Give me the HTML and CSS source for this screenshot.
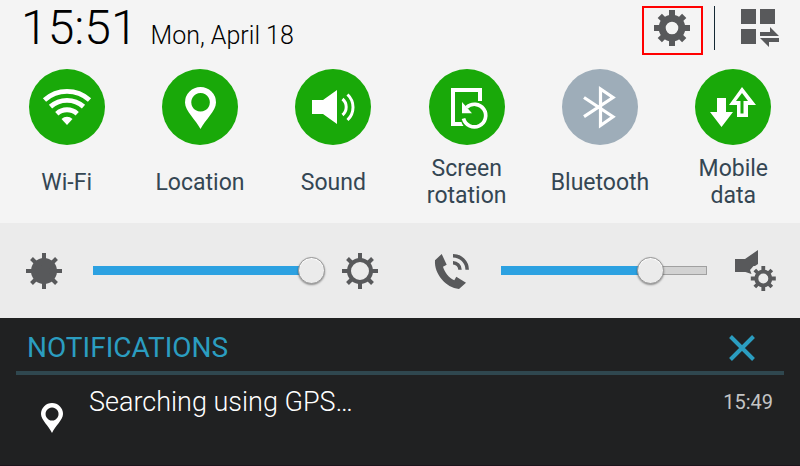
FILE: index.html
```html
<!DOCTYPE html>
<html lang="en">
<head>
    <meta charset="UTF-8">
    <meta name="viewport" content="width=device-width, initial-scale=1.0">
    <title>Notification panel</title>
    <link rel="stylesheet" href="styles.css">
</head>
<body>
    <header class="status">
        <time class="clock">15:51</time>
        <span class="date">Mon, April 18</span>
        <div class="actions">
            <button type="button" class="settings" aria-label="Settings">
                <svg width="36" height="36" viewBox="-18 -18 36 36">
                    <circle r="9.8" fill="none" stroke="#58595b" stroke-width="7"/>
                    <path d="M0-18V-11M0 18V11M-18 0H-11M18 0H11M-12.2-12.2L-8-8M12.2-12.2L8-8M-12.2 12.2L-8 8M12.2 12.2L8 8" stroke="#58595b" stroke-width="6"/>
                </svg>
            </button>
            <button type="button" class="edit" aria-label="Edit quick settings">
                <svg width="38" height="38" viewBox="0 0 38 38" fill="#58595b">
                    <path d="M0 0h15v15H0zM19 0h15v15H19zM0 20h15v15H0z"/>
                    <path d="M19 23h10v-5l9 9H19zM38 29H19l9 9v-5h10z"/>
                </svg>
            </button>
        </div>
    </header>

    <main>
        <section class="tiles">
            <button type="button" class="tile">
                <svg class="circle" viewBox="0 0 76 76">
                    <path d="M15.5 31a33.6 33.6 0 0 1 45 0M21.5 37.6a24.7 24.7 0 0 1 33 0M27.8 44.7a15.2 15.2 0 0 1 20.4 0" fill="none" stroke="#fff" stroke-width="4.8"/>
                    <path d="M38 56l-5.5-6a8 8 0 0 1 11 0z" fill="#fff"/>
                </svg>
                <span class="label">Wi-Fi</span>
            </button>
            <button type="button" class="tile">
                <svg class="circle" viewBox="0 0 76 76">
                    <path d="M38.5 60C34 51 23 42 23 33.5a15.5 15.5 0 0 1 31 0C54 42 43 51 38.5 60zM38.5 24a9.3 9.3 0 1 0 .1 0z" fill="#fff" fill-rule="evenodd"/>
                </svg>
                <span class="label">Location</span>
            </button>
            <button type="button" class="tile">
                <svg class="circle" viewBox="0 0 76 76">
                    <path d="M17 31h11l14-10v34L28 45H17z" fill="#fff"/>
                    <path d="M47.5 30a10.5 10.5 0 0 1 0 16M52.5 25.5a17.5 17.5 0 0 1 0 25.5" fill="none" stroke="#fff" stroke-width="3"/>
                </svg>
                <span class="label">Sound</span>
            </button>
            <button type="button" class="tile">
                <svg class="circle" viewBox="0 0 76 76">
                    <path d="M51 32V21H24v34h8.5" fill="none" stroke="#fff" stroke-width="4"/>
                    <path d="M32 53l2.5 4H32z" fill="#fff"/>
                    <path d="M37.5 38.5a11.3 11.3 0 1 1-3 11" fill="none" stroke="#fff" stroke-width="3.7"/>
                    <path d="M33 33v11.3h10z" fill="#fff"/>
                </svg>
                <span class="label">Screen rotation</span>
            </button>
            <button type="button" class="tile">
                <svg class="circle off" viewBox="0 0 76 76">
                    <path d="M22 28.5L51 47.7 38.5 56.5V20L51 28.5 22 47.7" fill="none" stroke="#fff" stroke-width="3.2"/>
                </svg>
                <span class="label">Bluetooth</span>
            </button>
            <button type="button" class="tile">
                <svg class="circle" viewBox="0 0 76 76">
                    <path d="M22 29h9v14h7L26.5 58 15 43h7zM47 18l14 18h-8v12H42V36h-8zM47 24l-6 8h4.5v12.5h3V32H53z" fill="#fff" fill-rule="evenodd"/>
                </svg>
                <span class="label">Mobile data</span>
            </button>
        </section>

        <section class="sliders">
            <div class="slider brightness">
                <svg width="36" height="36" viewBox="-18 -18 36 36">
                    <circle r="13" fill="#58595b"/>
                    <path d="M0-18V18M-18 0H18M-12.5-12.5L12.5 12.5M12.5-12.5L-12.5 12.5" stroke="#58595b" stroke-width="4"/>
                </svg>
                <input type="range" aria-label="Brightness" value="100">
                <svg width="36" height="36" viewBox="-18 -18 36 36">
                    <circle r="11" fill="none" stroke="#58595b" stroke-width="4"/>
                    <path d="M0-18V-12M0 18V12M-18 0H-12M18 0H12M-12.5-12.5L-8-8M12.5-12.5L8-8M-12.5 12.5L-8 8M12.5 12.5L8 8" stroke="#58595b" stroke-width="4"/>
                </svg>
            </div>
            <div class="slider volume">
                <svg width="36" height="36" viewBox="0 0 36 36">
                    <path d="M1 7.3L7.7 1l5 10.7L9 13.7C10.5 19 15 25 20.3 27.3l2-3.6L32 29.7 25 36C12 35 0 21 1 7.3z" fill="#58595b"/>
                    <path d="M19 2.7a14.2 14.2 0 0 1 14.2 14M19 9.7a7 7 0 0 1 7 7" fill="none" stroke="#58595b" stroke-width="3.5"/>
                </svg>
                <input type="range" aria-label="Call volume" value="76" style="--value: 76%">
                <svg width="41" height="41" viewBox="0 0 41 41">
                    <path d="M0 9h10L23 0v14l-3 2h-1.5L15 20l1.5 4-6-2H0z" fill="#58595b"/>
                    <g transform="translate(28.3 28.5)" fill="none" stroke="#58595b">
                        <circle r="7" stroke-width="4"/>
                        <path d="M0-12.5V-8M0 12.5V8M-12.5 0H-8M12.5 0H8M-8.5-8.5L-5-5M8.5-8.5L5-5M-8.5 8.5L-5 5M8.5 8.5L5 5" stroke-width="3.8"/>
                    </g>
                </svg>
            </div>
        </section>

        <section class="notifications">
            <div class="heading">
                <h2>NOTIFICATIONS</h2>
                <button type="button" class="clear" aria-label="Clear notifications">
                    <svg width="26" height="26" viewBox="0 0 26 26">
                        <path d="M1.5 1.5l23 23M24.5 1.5l-23 23" stroke="#2b9dc0" stroke-width="4"/>
                    </svg>
                </button>
            </div>
            <article class="item">
                <svg width="22" height="30" viewBox="0 0 22 30">
                    <path d="M11 30C8 23 0 17 0 11a11 11 0 0 1 22 0C22 17 14 23 11 30zM11 4.5a6.5 6.5 0 1 0 .1 0z" fill="#fff" fill-rule="evenodd"/>
                </svg>
                <p>Searching using GPS…</p>
                <time>15:49</time>
            </article>
        </section>
    </main>
</body>
</html>
```
FILE: styles.css
```css
* {
    box-sizing: border-box;
}
body {
    margin: 0;
    min-height: 100vh;
    border-bottom: 1px solid #1c141c;
    background: #202122;
    font-family: Roboto, "Liberation Sans", sans-serif;
}
svg {
    display: block;
    flex-shrink: 0;
}
button {
    padding: 0;
    border: none;
    background: none;
    font: inherit;
    cursor: pointer;
}

/* Clock row */
.status {
    display: flex;
    align-items: baseline;
    height: 56px;
    padding: 0 21px;
    background: #f4f4f4;
    color: #000;
    font-weight: 300;
}
.clock {
    font-size: 48px;
    line-height: 55px;
}
.date {
    margin-left: 13px;
    font-size: 25px;
}
.actions {
    display: flex;
    align-self: flex-start;
    margin: 6px 0 0 auto;
}
.settings {
    display: flex;
    justify-content: center;
    width: 61px;
    height: 49px;
    padding: 2px 2px 0 0;
    border: 2px solid #f00;
}
.edit {
    height: 44px;
    margin-left: 11px;
    padding-left: 26px;
    border-left: 1px solid #142833;
}

/* Quick toggles */
.tiles {
    display: grid;
    grid-template-columns: repeat(6, 1fr);
    padding: 13px 0 14px;
    background: #f4f4f4;
}
.tile {
    display: flex;
    flex-direction: column;
    align-items: center;
    color: #344653;
}
.circle {
    width: 76px;
    height: 76px;
    border-radius: 50%;
    background: #19a909;
}
.circle.off {
    background: #9eadb9;
}
.label {
    display: flex;
    align-items: center;
    max-width: 100px;
    height: 54px;
    margin-top: 10px;
    font-size: 23px;
    line-height: 27px;
}

/* Brightness and volume */
.sliders {
    display: grid;
    grid-template-columns: 1fr 1fr;
    height: 95px;
    background: #ebebeb;
}
.slider {
    display: flex;
    align-items: center;
    padding: 0 22px 0 26px;
}
.volume {
    padding: 0 24px 0 34px;
}
.slider input {
    flex: 1;
    min-width: 0;
    height: 27px;
    margin: 0 16px 0 31px;
    appearance: none;
    background: none;
}
.volume input {
    margin-right: 28px;
}
.slider input::-webkit-slider-runnable-track {
    height: 9px;
    border: 1px solid transparent;
    background:
        linear-gradient(#2ca1e1, #2ca1e1) 0 0 / var(--value) 100% no-repeat border-box,
        linear-gradient(#d2d2d2, #d2d2d2) padding-box,
        #a0a0a0 border-box;
}
/* track stops under the thumb at full brightness */
.brightness input::-webkit-slider-runnable-track {
    background: linear-gradient(#2ca1e1, #2ca1e1) 0 0 / 96% 100% no-repeat border-box;
}
.slider input::-webkit-slider-thumb {
    width: 27px;
    height: 27px;
    margin-top: -10px;
    appearance: none;
    border: 1px solid #999;
    border-radius: 50%;
    background: #ebebeb;
    box-shadow: 0 1px 2px rgba(0, 0, 0, .4), inset 0 1px 1px #fff;
}

/* Notification list */
.notifications {
    padding: 0 16px;
    color: #fff;
}
.heading {
    display: flex;
    align-items: center;
    justify-content: space-between;
    height: 57px;
    padding: 6px 29px 0 11px;
    border-bottom: 4px solid #2f474f;
}
h2 {
    margin: 0;
    color: #2b9dc0;
    font-size: 28px;
    font-weight: 400;
}
.item {
    display: flex;
    align-items: flex-start;
    padding: 10px 11px 0 25px;
}
.item svg {
    margin-top: 18px;
}
.item p {
    flex: 1;
    margin: 0 0 0 26px;
    font-size: 27px;
    font-weight: 300;
    line-height: 34px;
}
.item time {
    color: #c4c4c4;
    font-size: 20px;
    line-height: 34px;
}
```
